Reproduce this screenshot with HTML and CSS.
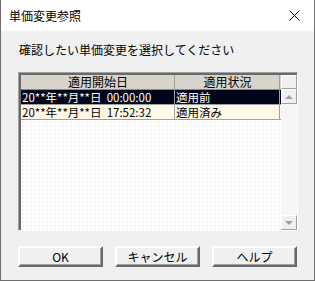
FILE: index.html
```html
<html lang="ja">
<head>
<meta charset="utf-8"/>
<title>単価変更参照</title>
<link rel="stylesheet" href="styles.css">
</head>
<body>
<div class="dialog">
  <div class="titlebar">
    <span class="title">単価変更参照</span>
    <svg class="close" width="11" height="11" viewBox="0 0 11 11">
      <path d="M0.5 0.5 L10.5 10.5 M10.5 0.5 L0.5 10.5" stroke="#000" stroke-width="1"/>
    </svg>
  </div>
  <div class="client">
    <div class="prompt">確認したい単価変更を選択してください</div>
    <div class="listbox">
      <div class="list">
        <div class="row head">
          <div class="cell c1">適用開始日</div>
          <div class="cell c2">適用状況</div>
        </div>
        <div class="row selected">
          <div class="cell c1">20**年**月**日&nbsp;&nbsp;00:00:00</div>
          <div class="cell c2">適用前</div>
        </div>
        <div class="row">
          <div class="cell c1">20**年**月**日&nbsp;&nbsp;17:52:32</div>
          <div class="cell c2">適用済み</div>
        </div>
        <div class="empty"></div>
      </div>
      <div class="scrollbar">
        <div class="corner"></div>
        <div class="arrow up"><span></span></div>
        <div class="track"></div>
        <div class="arrow down"><span></span></div>
      </div>
    </div>
    <div class="buttons">
      <button class="btn">OK</button>
      <button class="btn">キャンセル</button>
      <button class="btn">ヘルプ</button>
    </div>
  </div>
</div>
</body>
</html>
```

FILE: styles.css
```css
body {
  margin: 0;
  font: 12px "Noto Sans CJK JP", sans-serif;
  color: #000;
}
.dialog {
  width: 315px;
  height: 281px;
  box-sizing: border-box;
  border: 1px solid #6f6f6f;
  border-top: none;
  display: flex;
  flex-direction: column;
}
.titlebar {
  height: 31px;
  background: #fff;
  display: flex;
  align-items: center;
  justify-content: space-between;
  padding: 0 14px 0 8px;
}
.title {
  font-size: 12px;
}
.client {
  flex: 1;
  background: #f0f0f0;
  padding: 11px 16px 0 17px;
}
.prompt {
  line-height: 16px;
  padding-left: 1px;
}
.listbox {
  margin-top: 14px;
  height: 159px;
  box-sizing: border-box;
  border: 1px solid;
  border-color: #a0a0a0 #fff #fff #a0a0a0;
  display: flex;
}
.list {
  flex: 1;
  border-top: 2px solid #696969;
  border-left: 2px solid #696969;
  display: flex;
  flex-direction: column;
  background-color: #fff;
}
.row {
  display: flex;
  height: 14px;
  line-height: 14px;
  font-size: 11.5px;
  background: #fff8e6;
  border-bottom: 1px solid #a0a0a0;
}
.row.head {
  font-size: 12px;
  background: #d8d4cc;
  border-bottom: 1px solid #8a8a8a;
}
.row.selected {
  background: #03061a;
  color: #fff;
}
.cell {
  box-sizing: border-box;
  padding-left: 1px;
  white-space: nowrap;
}
.c1 {
  width: 154px;
  border-right: 1px solid #a0a0a0;
}
.c2 {
  width: 105px;
  border-right: 1px solid #a0a0a0;
}
.head .cell {
  text-align: center;
}
.empty {
  flex: 1;
  background-image: radial-gradient(#e4e4e4 0.6px, transparent 0.8px);
  background-size: 4px 4px;
}
.scrollbar {
  width: 16px;
  border-top: 2px solid #696969;
  display: flex;
  flex-direction: column;
  background: #f0f0f0;
}
.corner {
  height: 14px;
  box-sizing: border-box;
  border: 1px solid;
  border-color: #fff #a0a0a0 #a0a0a0 #fff;
  background: #f0f0f0;
}
.arrow {
  height: 15px;
  box-sizing: border-box;
  border: 1px solid;
  border-color: #fff #a0a0a0 #a0a0a0 #fff;
  display: flex;
  align-items: center;
  justify-content: center;
}
.arrow span {
  width: 0;
  height: 0;
  border-left: 4px solid transparent;
  border-right: 4px solid transparent;
}
.up span {
  border-bottom: 4px solid #a0a0a0;
}
.down span {
  border-top: 4px solid #a0a0a0;
}
.track {
  flex: 1;
  background-image: repeating-conic-gradient(#f0f0f0 0 25%, #fcfcfc 0 50%);
  background-size: 2px 2px;
}
.buttons {
  display: flex;
  gap: 12px;
  margin-top: 15px;
}
.btn {
  width: 85px;
  height: 21px;
  padding: 0;
  font: 12px "Noto Sans CJK JP", sans-serif;
  line-height: 15px;
  background: #f0f0f0;
  border: 2px solid;
  border-color: #fff #696969 #696969 #fff;
  box-shadow: inset -1px -1px 0 #a0a0a0;
}
```
